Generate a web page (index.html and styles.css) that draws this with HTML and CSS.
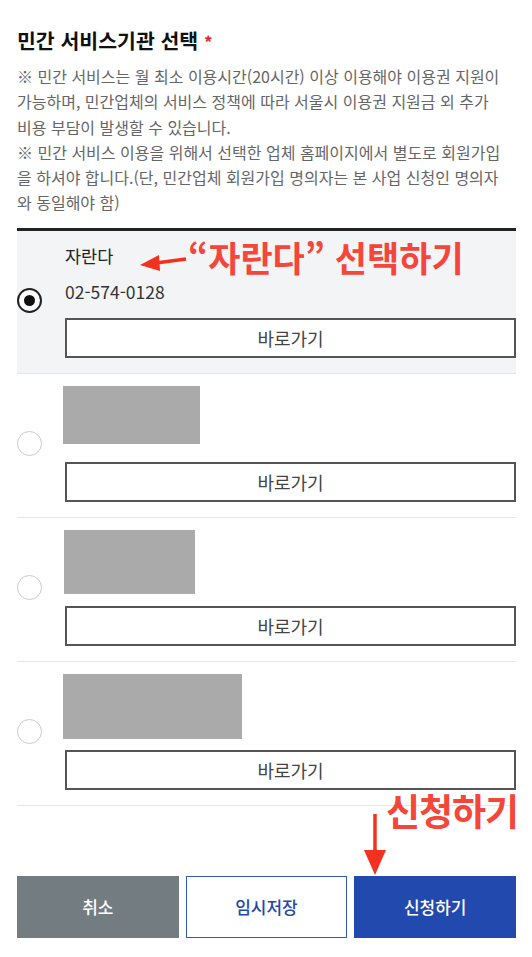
FILE: index.html
```html
<!DOCTYPE html>
<html lang="ko">
<head>
  <meta charset="UTF-8" />
  <meta name="viewport" content="width=device-width, initial-scale=1.0" />
  <title>민간 서비스기관 선택</title>
  <link rel="stylesheet" href="styles.css">
</head>
<body>
  <div class="page">
    <h2 class="title">민간 서비스기관 선택 <span class="req">*</span></h2>
    <p class="notice">※ 민간 서비스는 월 최소 이용시간(20시간) 이상 이용해야 이용권 지원이 가능하며, 민간업체의 서비스 정책에 따라 서울시 이용권 지원금 외 추가 비용 부담이 발생할 수 있습니다.<br>※ 민간 서비스 이용을 위해서 선택한 업체 홈페이지에서 별도로 회원가입을 하셔야 합니다.(단, 민간업체 회원가입 명의자는 본 사업 신청인 명의자와 동일해야 함)</p>

    <ul class="agency-list">
      <li class="agency selected">
        <span class="radio"></span>
        <div class="agency-body">
          <p class="agency-name">자란다</p>
          <p class="agency-tel">02-574-0128</p>
          <button class="go-btn">바로가기</button>
        </div>
      </li>
      <li class="agency">
        <span class="radio"></span>
        <div class="agency-body">
          <div class="masked masked-a"></div>
          <button class="go-btn">바로가기</button>
        </div>
      </li>
      <li class="agency">
        <span class="radio"></span>
        <div class="agency-body">
          <div class="masked masked-b"></div>
          <button class="go-btn">바로가기</button>
        </div>
      </li>
      <li class="agency">
        <span class="radio"></span>
        <div class="agency-body">
          <div class="masked masked-c"></div>
          <button class="go-btn">바로가기</button>
        </div>
      </li>
    </ul>

    <div class="actions">
      <button class="btn btn-cancel">취소</button>
      <button class="btn btn-save">임시저장</button>
      <button class="btn btn-submit">신청하기</button>
    </div>

    <!-- annotations drawn over the screenshot -->
    <div class="note note-pick">
      <svg class="note-arrow" width="50" height="24" viewBox="0 0 50 24">
        <path d="M48 9 L18 13" stroke="#f2321f" stroke-width="3.5" fill="none"/>
        <path d="M2 15 L21 5 L22 21 Z" fill="#f2321f"/>
      </svg>
      <span class="note-text">“자란다” 선택하기</span>
    </div>
    <div class="note note-submit">
      <span class="note-text">신청하기</span>
      <svg class="note-arrow-down" width="26" height="64" viewBox="0 0 26 64">
        <path d="M13 2 L13 42" stroke="#f2321f" stroke-width="3.5" fill="none"/>
        <path d="M2 38 L24 38 L13 63 Z" fill="#f2321f"/>
      </svg>
    </div>
  </div>
</body>
</html>
```

FILE: styles.css
```css
* {
  box-sizing: border-box;
}
body {
  margin: 0;
  font-family: "Noto Sans CJK KR", "Noto Sans", sans-serif;
  background: #fff;
  color: #222;
}
.page {
  position: relative;
  padding: 26px 16px 19px 17px;
}
.title {
  margin: 0;
  font-size: 20.5px;
  line-height: 28px;
  font-weight: 700;
  color: #111;
}
.req {
  color: #e5262b;
  font-size: 17px;
}
.notice {
  margin: 8px 0 0;
  padding-right: 12px;
  font-size: 16px;
  line-height: 25.3px;
  color: #666;
}

.agency-list {
  list-style: none;
  margin: 12px 0 0;
  padding: 0;
  border-top: 3px solid #222;
}
.agency {
  display: flex;
  align-items: center;
  padding: 12px 0 15px;
  border-bottom: 1px solid #e6e6e6;
}
.agency.selected {
  background: #f3f4f6;
}
.radio {
  flex: none;
  width: 25px;
  height: 25px;
  margin-right: 23px;
  border: 1.5px solid #ccc;
  border-radius: 50%;
  background: #fff;
  position: relative;
}
.selected .radio {
  border: 2px solid #222;
}
.selected .radio::after {
  content: "";
  position: absolute;
  left: 50%;
  top: 50%;
  width: 11px;
  height: 11px;
  margin: -5.5px 0 0 -5.5px;
  border-radius: 50%;
  background: #111;
}
.agency-body {
  flex: 1;
  display: flex;
  flex-direction: column;
}
.agency-name, .agency-tel {
  margin: 0;
  font-size: 17.5px;
  line-height: 26px;
  color: #222;
}
.agency-tel {
  margin-top: 10px;
  color: #333;
}
.agency-tel + .go-btn {
  margin-top: 13px;
}
.masked {
  background: #aaa;
  margin-left: -2px;
  margin-bottom: 12px;
}
.masked-a { width: 137px; height: 58px; margin-bottom: 18px; }
.masked-b { width: 131px; height: 64px; margin-left: -1px; }
.masked-c { width: 179px; height: 65px; margin-bottom: 11px; }
.go-btn {
  height: 40px;
  width: 100%;
  border: 2px solid #555;
  background: #fff;
  font-family: inherit;
  font-size: 18px;
  color: #444;
}

.actions {
  display: grid;
  grid-template-columns: repeat(3, 1fr);
  gap: 7px;
  margin-top: 70px;
}
.btn {
  height: 62px;
  border: none;
  font-family: inherit;
  font-size: 17px;
  font-weight: 500;
}
.btn-cancel {
  background: #737c81;
  color: #fff;
}
.btn-save {
  background: #fff;
  color: #2448a8;
  border: 1.5px solid #3459bd;
}
.btn-submit {
  background: #2249ae;
  color: #fff;
}

.note {
  position: absolute;
  color: #f4463a;
  font-weight: 700;
  line-height: 1;
}
.note-text {
  font-size: 35px;
}
.note-pick {
  left: 138px;
  top: 239px;
  display: flex;
  align-items: center;
}
.note-arrow {
  margin-top: 10px;
}
.note-submit {
  left: 362px;
  top: 792px;
  width: 170px;
}
.note-submit .note-text {
  display: block;
  margin-left: 24px;
  font-size: 37px;
  letter-spacing: -1px;
}
.note-arrow-down {
  position: absolute;
  left: 0;
  top: 20px;
}
```
